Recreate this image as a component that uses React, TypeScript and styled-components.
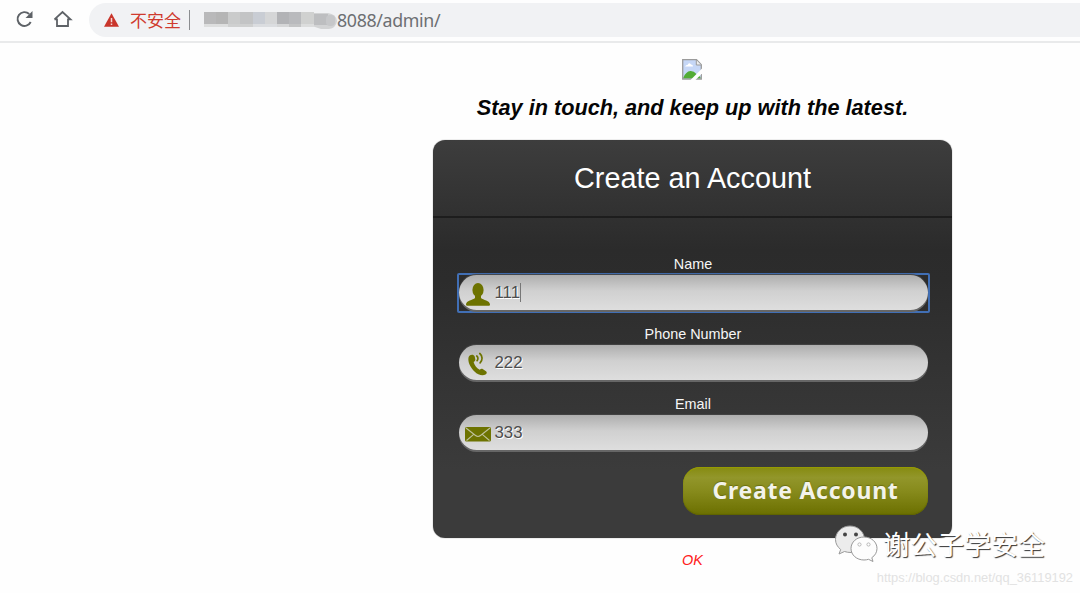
import React from 'react';
import styled, { createGlobalStyle, css } from 'styled-components';

const Global = createGlobalStyle`
  * { box-sizing: border-box; }
  body {
    margin: 0;
    background: #fefefe;
    font-family: "Liberation Sans", Arial, sans-serif;
    overflow: hidden;
  }
`;

const Page = styled.div`
  position: relative;
  height: 593px;
  overflow: hidden;
`;

const Toolbar = styled.header`
  display: flex;
  align-items: center;
  height: 43px;
  padding: 0 0 3px 15px;
  border-bottom: 2px solid #e9eaeb;
`;

const ToolIcon = styled.svg`
  display: block;
  width: 20px;
  height: 20px;
  margin-right: 18px;
  flex: none;
`;

const AddressBar = styled.div`
  display: flex;
  align-items: center;
  flex: 1;
  height: 34px;
  margin-left: -2px;
  margin-top: 2px;
  padding-left: 15px;
  border-radius: 17px 0 0 17px;
  background: #f1f2f4;
`;

const Warning = styled.svg`
  display: block;
  width: 15px;
  height: 14px;
`;

const Insecure = styled.span`
  margin-left: 11px;
  font: 17px/24px "Noto Sans CJK SC", sans-serif;
  color: #cf3a2e;
`;

const Separator = styled.span`
  width: 1px;
  height: 20px;
  margin: 0 14px 0 8px;
  background: #8b8d90;
`;

const Mosaic = styled.svg`
  display: block;
  width: 133px;
  height: 20px;
`;

const Url = styled.span`
  font: 17.8px/24px "Noto Sans", "Open Sans", sans-serif;
  letter-spacing: -0.35px;
  color: #6d6f72;
`;

const Content = styled.main`
  display: flex;
  flex-direction: column;
  align-items: center;
  margin-left: 305px;
  padding-top: 16px;
`;

const BrokenImage = styled.svg`
  display: block;
  width: 20px;
  height: 21px;
  margin-right: 1px;
`;

const Tagline = styled.h1`
  margin: 13px 0 18px;
  font-size: 21.7px;
  line-height: 29px;
  font-style: italic;
  font-weight: bold;
  color: #050505;
  white-space: nowrap;
`;

const Card = styled.form`
  width: 519px;
  height: 398px;
  border-radius: 12px;
  background: linear-gradient(#3d3d3d 0, #2b2b2b 110px, #2c2c2c 140px, #3b3b3b 330px, #3b3b3b 100%);
  box-shadow: 0 0 1px #555;
`;

const CardTitle = styled.h2`
  height: 78px;
  margin: 0;
  border-bottom: 2px solid #1d1d1d;
  font-size: 28.8px;
  font-weight: normal;
  line-height: 76px;
  text-align: center;
  color: #fff;
`;

const Fields = styled.div`
  display: flex;
  flex-direction: column;
  padding: 37px 24px 0 25px;
`;

const Field = styled.label`
  display: flex;
  flex-direction: column;
  align-items: center;
  height: 70px;
  font-size: 14.4px;
  line-height: 18px;
  color: #f6f6f6;
`;

const InputPill = styled.div`
  display: flex;
  align-items: center;
  width: 100%;
  height: 35px;
  margin-top: 2px;
  border-radius: 18px;
  padding-left: 5px;
  background: linear-gradient(#aeaeae, #d0d0d0 45%, #dedede);
  box-shadow: 0 2px 0 #666, 0 -1px 1px #444;
`;

/* The ring stays rectangular around the rounded field. */
const FocusRing = styled.div<{ $on?: boolean }>`
  width: 473px;
  height: 40px;
  margin: 0 -2px;
  padding: 0 2px;
  ${p => p.$on && css`
    box-shadow: inset 0 0 0 2px #416fb5;
    border-radius: 2px;
  `}
`;

const FieldIcon = styled.svg`
  display: block;
  width: 28px;
  height: 28px;
  margin-top: 2px;
`;

const Value = styled.span`
  margin-left: 3px;
  font-size: 16.8px;
  color: #4d4d4d;
  text-shadow: 1px 1px 0 #fff;
`;

const Caret = styled.span`
  width: 1px;
  height: 19px;
  background: #777;
`;

const Submit = styled.button`
  align-self: flex-end;
  width: 245px;
  height: 48px;
  margin-top: 2px;
  padding: 0 0 2px;
  border: 0;
  border-radius: 17px;
  background: linear-gradient(#868b10, #92962a 22%, #878b1c 50%, #6b6f00);
  box-shadow: inset 0 1px 1px #989d00, inset 0 -1px 1px #5f6300;
  font: 700 23px/46px "Noto Sans", "Open Sans", sans-serif;
  letter-spacing: 0.75px;
  color: #f3f3ea;
  text-shadow: 0 -1px 1px #6a6e10;
`;

const Status = styled.p`
  margin: 13px 0 0;
  font-size: 14.4px;
  line-height: 18px;
  font-style: italic;
  color: #ff2020;
`;

const Watermark = styled.div`
  position: absolute;
  left: 834px;
  top: 524px;
  display: flex;
  align-items: center;
`;

const ChatLogo = styled.svg`
  display: block;
  width: 44px;
  height: 40px;
`;

const WatermarkName = styled.span`
  margin-left: 5px;
  font: 400 27px/40px "Noto Sans CJK SC", sans-serif;
  color: #fff;
  text-shadow: 1px 1px 1px #333;
  white-space: nowrap;
`;

const SourceLink = styled.div`
  position: absolute;
  right: 7px;
  top: 570px;
  font-size: 12.85px;
  line-height: 16px;
  color: #e2e2e2;
  white-space: nowrap;
`;

const blocks: [number, number, number, number, string][] = [
  [0, 2, 12, 12, '#b9b9ba'], [12, 2, 12, 12, '#b5b5b5'], [24, 2, 12, 12, '#cacbcb'],
  [36, 2, 13, 12, '#c3c4c5'], [49, 2, 12, 12, '#c9cdd4'], [61, 2, 12, 12, '#d5d6d7'],
  [73, 2, 12, 12, '#b2b3b6'], [85, 2, 12, 12, '#b9babd'], [97, 2, 13, 12, '#d0d1d0'],
  [0, 14, 24, 3, '#dddede'], [24, 14, 25, 3, '#cfd0d0'], [49, 14, 24, 3, '#dbdde0'],
  [73, 14, 12, 3, '#d5d6d7'], [85, 14, 12, 3, '#c3c4c5'], [97, 14, 13, 3, '#dcdddd'],
];

const PersonIcon = () => (
  <FieldIcon viewBox="0 0 28 28" fill="#6d7300">
    <ellipse cx="14" cy="10" rx="5.6" ry="7" />
    <path d="M11 14h6v4c2 2 9 2.500 9 6.500 0 .8-.3 1.200-1 1.200H3c-.7 0-1-.4-1-1.200C2 20.500 9 20 11 18z" />
  </FieldIcon>
);

const PhoneIcon = () => (
  <FieldIcon viewBox="0 0 28 28" fill="#6d7300">
    <path d="M6 5.200c1.800-1 4-.6 4.700 1.200l.6 2.800c.2 1.300-.4 2-1.700 2.700 1 3.800 3.300 6.200 6.200 7.800 1-.9 1.900-1.200 3.200-.5l3 2c1.200 1 1 2.500-.5 3.300-3 1.600-7.500.6-11-3C6.500 17.700 3.600 12 4.500 7.500c.2-1 .7-1.800 1.500-2.300z" />
    <g fill="none" stroke="#6d7300" strokeWidth="1.700" strokeLinecap="round">
      <path d="M12.800 6c1.400 1 1.500 3.200.3 4.600" />
      <path d="M15.800 3.500c2.900 2.500 3 6.700.3 9.300" />
    </g>
  </FieldIcon>
);

const MailIcon = () => (
  <FieldIcon viewBox="0 0 28 28">
    <rect x="1" y="7" width="26" height="14.500" rx="1.500" fill="#6d7300" />
    <path d="M2 8l9.500 7.500c1.700 1.300 3.300 1.300 5 0L26 8M2.500 20.500l7.500-6.300M25.500 20.500L18 14.200" fill="none" stroke="#bfc19b" strokeWidth="1.100" />
  </FieldIcon>
);

const fields = [
  { label: 'Name', value: '111', Icon: PersonIcon, focused: true },
  { label: 'Phone Number', value: '222', Icon: PhoneIcon, focused: false },
  { label: 'Email', value: '333', Icon: MailIcon, focused: false },
];

export default function App() {
  return (
    <Page>
      <Global />
      <Toolbar>
        <ToolIcon viewBox="0 0 20 20">
          <path d="M15.700 13A6.900 6.900 0 1 1 14.200 5" fill="none" stroke="#5e6267" strokeWidth="1.900" />
          <path d="M17.500 2v7h-7z" fill="#5e6267" />
        </ToolIcon>
        <ToolIcon viewBox="0 0 20 20">
          <path d="M4 9.500V17h11V9.500M1.500 10.400L9.500 3l8 7.400H15M1.500 10.400H4" fill="none" stroke="#5e6267" strokeWidth="1.800" />
        </ToolIcon>
        <AddressBar>
          <Warning viewBox="0 0 15 14">
            <path d="M7.500 .3L15 13.800H0z" fill="#c9352b" />
            <path d="M7.500 5v4.200M7.500 10.500v1.600" stroke="#f3d6d4" strokeWidth="1.500" />
          </Warning>
          <Insecure>不安全</Insecure>
          <Separator />
          <Mosaic viewBox="0 0 133 20">
            <rect x="-5" y="3" width="14" height="13" rx="6" fill="#e9eaeb" />
            <path d="M108 3h16q8 1 9 8-1 7-8 8h-8l-9-3z" fill="#d2d3d4" />
            <rect x="110" y="4" width="14" height="11" fill="#bdbec0" />
            <rect x="122" y="5" width="9" height="11" rx="4" fill="#c6c7c9" />
            {blocks.map(([x, y, w, h, c]) => (
              <rect key={`${x}-${y}`} x={x} y={y} width={w} height={h} fill={c} />
            ))}
          </Mosaic>
          <Url>8088/admin/</Url>
        </AddressBar>
      </Toolbar>

      <Content>
        <BrokenImage viewBox="0 0 20 21">
          <path d="M.7 .7h13.800l4.800 5v14.300H.7z" fill="#c6d7f6" stroke="#9b9b9b" strokeWidth="1.300" />
          <path d="M3 7.500q1-2 2.500-1.500Q7 3 9 5.500q2 0 2 2z" fill="#fff" />
          <path d="M1.400 18.500q2.500-6 7-6.500 3.500-.2 6 3l4 3v1.300H1.400z" fill="#52ac35" />
          <path d="M8.500 21L20 9.500v5L13.500 21z" fill="#fefefe" />
          <path d="M14.300 1v5h4.800" fill="#eee" stroke="#9b9b9b" />
        </BrokenImage>
        <Tagline>Stay in touch, and keep up with the latest.</Tagline>
        <Card>
          <CardTitle>Create an Account</CardTitle>
          <Fields>
            {fields.map(({ label, value, Icon, focused }) => (
              <Field key={label}>
                {label}
                <FocusRing $on={focused}>
                  <InputPill>
                    <Icon />
                    <Value>{value}</Value>
                    {focused && <Caret />}
                  </InputPill>
                </FocusRing>
              </Field>
            ))}
            <Submit type="button">Create Account</Submit>
          </Fields>
        </Card>
        <Status>OK</Status>
      </Content>

      <Watermark>
        <ChatLogo viewBox="0 0 44 40" strokeWidth="1">
          <path d="M16 2C8 2 1.500 8 1.500 15.500c0 4 2 7.500 5.200 10L5 30l5.500-2.500q3 1 6.500 1C25 28 30.500 22 30.500 15.500 30.500 8 24 2 16 2z" fill="#ececec" stroke="#999" />
          <circle cx="11" cy="10.500" r="2" fill="#444" />
          <circle cx="22" cy="10.500" r="2" fill="#444" />
          <path d="M30 13c-7.300 0-13 5-13 11.500S22.700 36 30 36q2.500 0 4.500-.7L39 37.500l-1.200-3.800C41 31.600 43 28.300 43 24.500 43 18 37.300 13 30 13z" fill="#fdfdfd" stroke="#999" />
          <circle cx="25.500" cy="20.500" r="1.600" fill="#fff" stroke="#aaa" strokeWidth=".8" />
          <circle cx="34.500" cy="20.500" r="1.600" fill="#fff" stroke="#aaa" strokeWidth=".8" />
        </ChatLogo>
        <WatermarkName>谢公子学安全</WatermarkName>
      </Watermark>
      <SourceLink>https://blog.csdn.net/qq_36119192</SourceLink>
    </Page>
  );
}
